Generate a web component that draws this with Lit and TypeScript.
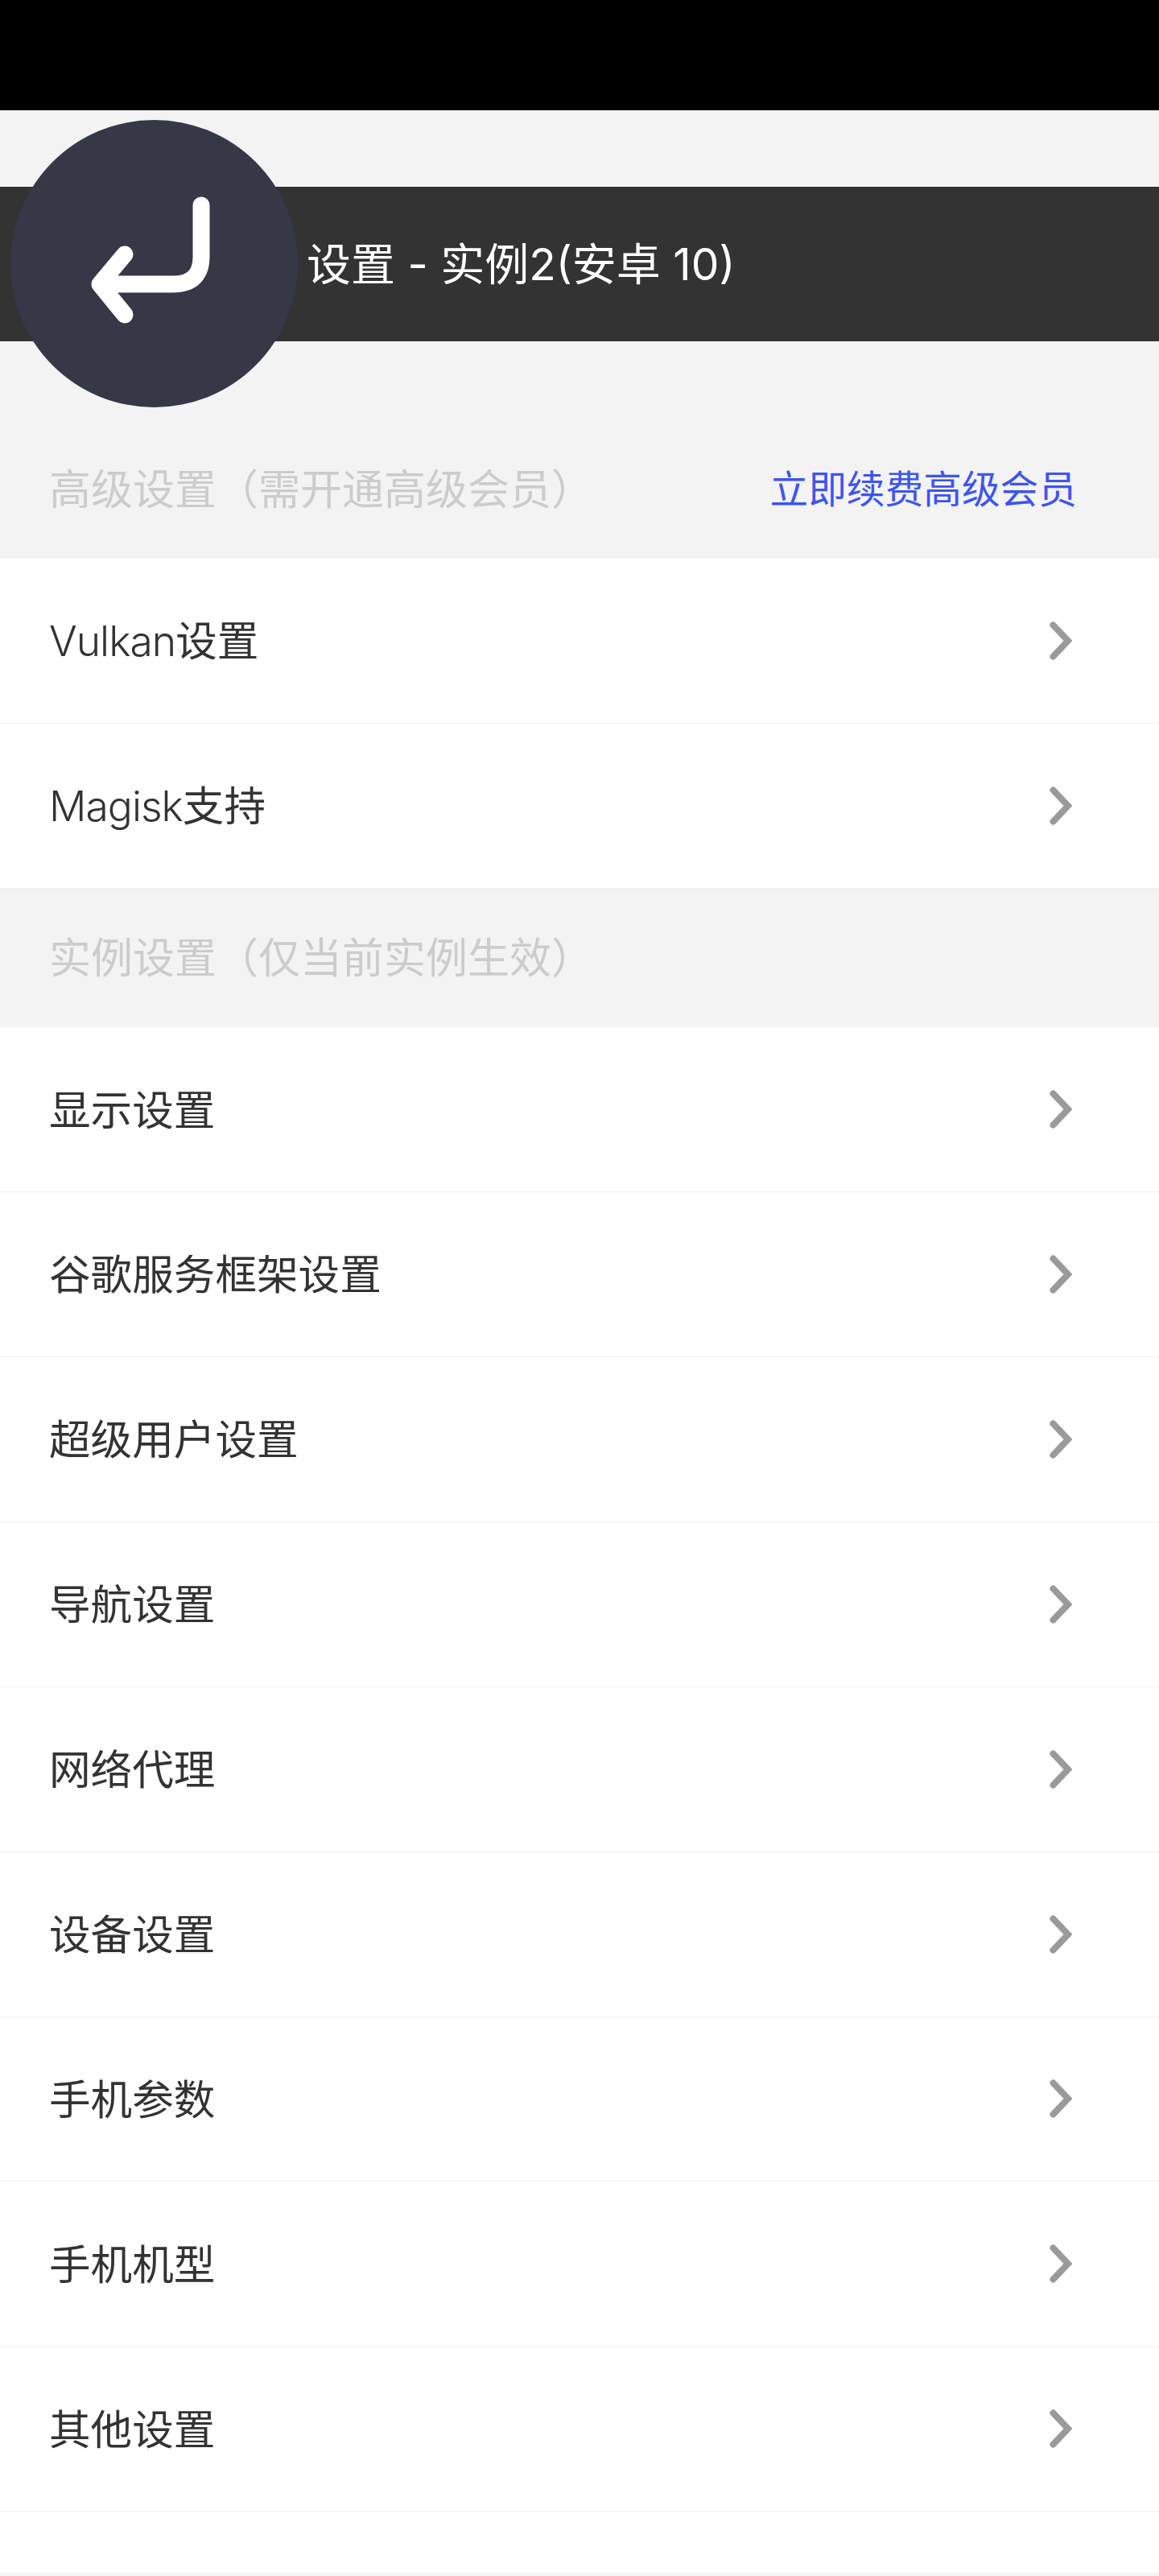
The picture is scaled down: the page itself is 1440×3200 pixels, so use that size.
import { LitElement, html, css } from "lit";
import { customElement } from "lit/decorators.js";

const chevron = html`<svg class="chev" viewBox="0 0 28 48" aria-hidden="true">
  <path d="M4.5 4.5 L23 24 L4.5 43.5" fill="none" stroke="#9a9a9a" stroke-width="8" stroke-linecap="round"/>
</svg>`;

@customElement("app-root")
export class AppRoot extends LitElement {
  static styles = css`
    :host {
      display: block;
      width: 1440px;
      height: 3200px;
      background: #f3f3f3;
      font-family: "Inter", "Noto Sans CJK SC", sans-serif;
      position: relative;
      overflow: hidden;
    }
    .status { height: 137px; background: #000; }
    .gap { height: 95px; }
    .titlebar {
      height: 192px;
      box-sizing: border-box;
      background: #333333;
      color: #fff;
      display: flex;
      align-items: center;
      padding-left: 381px;
      padding-bottom: 8px;
      font-size: 55px;
      font-weight: 400;
      white-space: pre;
    }
    .back {
      position: absolute;
      left: 13px;
      top: 149px;
      width: 357px;
      height: 357px;
      border-radius: 50%;
      background: #363847;
    }
    .back svg { display: block; width: 357px; height: 357px; }
    .spacer { height: 97.6px; }
    .section {
      height: 172.4px;
      box-sizing: border-box;
      padding: 0 102px 6px 61px;
      display: flex;
      align-items: center;
      justify-content: space-between;
      font-size: 52px;
      color: #cccccc;
      font-weight: 400;
    }
    .section a { color: #3d55f0; font-size: 47.7px; }
    .row {
      height: 204.9px;
      box-sizing: border-box;
      background: #fff;
      border-bottom: 1px solid #efefef;
      padding: 0 108px 0 61px;
      display: flex;
      align-items: center;
      justify-content: space-between;
      font-size: 51.6px;
      color: #333333;
      font-weight: 400;
    }
    .row > span { padding-bottom: 6px; }
    .latin { font-weight: 300; letter-spacing: -1px; }
    .chev { width: 28px; height: 48px; display: block; filter: blur(0.5px); }
    .tail { height: 76px; background: #fff; }
  `;

  render() {
    const r1: [string, string][] = [["Vulkan", "设置"], ["Magisk", "支持"]];
    const r2 = ["显示设置", "谷歌服务框架设置", "超级用户设置", "导航设置", "网络代理", "设备设置", "手机参数", "手机机型", "其他设置"];
    const row = (t: string) => html`<div class="row"><span>${t}</span>${chevron}</div>`;
    return html`
      <div class="status"></div>
      <div class="gap"></div>
      <div class="titlebar">设置 - 实例2(安卓 10)</div>
      <div class="spacer"></div>
      <div class="section"><span>高级设置（需开通高级会员）</span><a>立即续费高级会员</a></div>
      ${r1.map(([l, c]) => html`<div class="row"><span><span class="latin">${l}</span>${c}</span>${chevron}</div>`)}
      <div class="section"><span>实例设置（仅当前实例生效）</span></div>
      ${r2.map(row)}
      <div class="tail"></div>
      <div class="back">
        <svg viewBox="0 0 357 357" aria-hidden="true">
          <path d="M237 106 V170 Q237 204 202 204 H111 M142 167 L111 204 L142 242"
            fill="none" stroke="#fff" stroke-width="21" stroke-linecap="round" stroke-linejoin="round"/>
        </svg>
      </div>
    `;
  }
}
